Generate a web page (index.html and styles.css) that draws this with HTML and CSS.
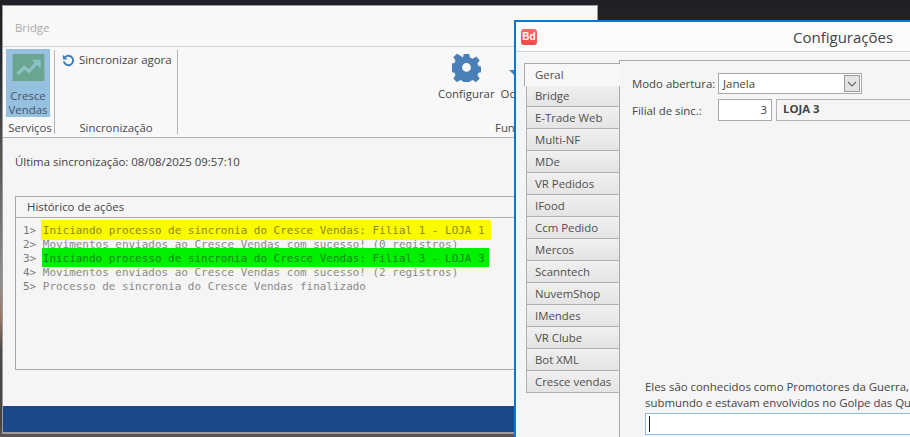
FILE: index.html
```html
<!DOCTYPE html>
<html lang="pt">
<head>
<meta charset="utf-8">
<title>Bridge</title>
<link rel="stylesheet" href="styles.css">
</head>
<body>
<div class="desktop">
  <section class="window main-window">
    <header class="main-title">Bridge</header>
    <div class="ribbon">
      <div class="group group-services">
        <div class="group-body">
          <button class="big-btn selected">
            <svg class="trend-icon" width="33" height="28" viewBox="0 0 33 28"><rect width="33" height="28" fill="#6aa58f"/><path d="M5 21 L12 14 L17 18 L25 9" fill="none" stroke="#8fc0c4" stroke-width="3.4"/><path d="M20 6 H29 V15 Z" fill="#8fc0c4"/></svg>
            <span>Cresce<br>Vendas</span>
          </button>
        </div>
        <div class="group-label">Serviços</div>
      </div>
      <div class="group group-sync">
        <div class="group-body">
          <div class="small-btn">
            <svg width="13" height="13" viewBox="0 0 13 13"><path d="M3 3.2 A4.7 4.7 0 1 1 1.8 7.6" fill="none" stroke="#3f7ab5" stroke-width="1.9"/><path d="M.8 .8 L1 5.4 L5.6 5.2 Z" fill="#3f7ab5"/></svg>
            <span>Sincronizar agora</span>
          </div>
        </div>
        <div class="group-label">Sincronização</div>
      </div>
      <div class="group group-func">
        <div class="group-body func-body">
          <div class="tool">
            <svg width="29" height="28" viewBox="0 0 29 28"><path fill="#4a7fb8" fill-rule="evenodd" d="M11.8 0h5.4l.8 4 2.6 1.1 3.5-2.2 3.6 3.7-2.2 3.4 1 2.6 4 .8v5.2l-4 .8-1 2.6 2.2 3.4-3.6 3.7-3.5-2.2-2.6 1.1-.8 4h-5.4l-.8-4-2.6-1.1-3.5 2.2-3.6-3.7 2.2-3.4-1-2.6-4-.8V10.4l4-.8 1-2.6-2.2-3.4 3.6-3.7 3.5 2.2L11 4zM14.5 9.6a4.4 4.4 0 1 0 0 8.8 4.4 4.4 0 0 0 0-8.8z" transform="translate(0 -.3) scale(1 .98)"/></svg>
            <span>Configurar</span>
          </div>
          <div class="tool">
            <svg width="29" height="28" viewBox="0 0 29 28"><path fill="#4a7fb8" d="M3 16 H27 L15 28 Z"/></svg>
            <span>Ocultar</span>
          </div>
        </div>
        <div class="group-label func-label">Funções</div>
      </div>
    </div>
    <div class="main-content">
      <p class="last-sync">Última sincronização: 08/08/2025 09:57:10</p>
      <div class="history">
        <div class="history-title">Histórico de ações</div>
        <div class="log">
          <div class="log-row"><span class="num">1&gt; </span><span class="hl yellow">Iniciando processo de sincronia do Cresce Vendas: Filial 1 - LOJA 1</span></div>
          <div class="log-row"><span class="num">2&gt; </span>Movimentos enviados ao Cresce Vendas com sucesso! (0 registros)</div>
          <div class="log-row"><span class="num">3&gt; </span><span class="hl green">Iniciando processo de sincronia do Cresce Vendas: Filial 3 - LOJA 3</span></div>
          <div class="log-row"><span class="num">4&gt; </span>Movimentos enviados ao Cresce Vendas com sucesso! (2 registros)</div>
          <div class="log-row"><span class="num">5&gt; </span>Processo de sincronia do Cresce Vendas finalizado</div>
        </div>
      </div>
    </div>
    <footer class="main-footer"></footer>
  </section>

  <section class="window dialog">
    <header class="dialog-title">
      <span class="app-badge">Bd</span>
      <span class="dialog-name">Configurações</span>
    </header>
    <div class="dialog-body">
      <nav class="tabs">
        <div class="tab active">Geral</div>
        <div class="tab">Bridge</div>
        <div class="tab">E-Trade Web</div>
        <div class="tab">Multi-NF</div>
        <div class="tab">MDe</div>
        <div class="tab">VR Pedidos</div>
        <div class="tab">IFood</div>
        <div class="tab">Ccm Pedido</div>
        <div class="tab">Mercos</div>
        <div class="tab">Scanntech</div>
        <div class="tab">NuvemShop</div>
        <div class="tab">IMendes</div>
        <div class="tab">VR Clube</div>
        <div class="tab">Bot XML</div>
        <div class="tab">Cresce vendas</div>
      </nav>
      <div class="panel">
        <div class="form-row">
          <label class="form-label">Modo abertura:</label>
          <div class="combo"><span>Janela</span><span class="combo-arrow"><svg width="10" height="6" viewBox="0 0 10 6"><path d="M1 1 L5 5 L9 1" fill="none" stroke="#666" stroke-width="1.2"/></svg></span></div>
        </div>
        <div class="form-row row-second">
          <label class="form-label">Filial de sinc.:</label>
          <div class="num-input">3</div>
          <div class="store-name">LOJA 3</div>
        </div>
        <div class="spacer"></div>
        <p class="quote">Eles são conhecidos como Promotores da Guerra, sendo figuras influentes do<br>submundo e estavam envolvidos no Golpe das Quatro Famílias</p>
        <div class="text-input"><span class="caret"></span></div>
      </div>
    </div>
  </section>
</div>
</body>
</html>
```
FILE: styles.css
```css
* { box-sizing: border-box; }
html, body { margin: 0; padding: 0; }
body {
  width: 910px;
  height: 437px;
  overflow: hidden;
  font-family: "Open Sans", "Noto Sans", sans-serif;
  font-size: 11.4px;
  color: #444;
}
.desktop {
  position: relative;
  width: 910px;
  height: 437px;
  overflow: hidden;
  background: linear-gradient(to bottom, #1f2025 0, #26272c 60px, #6d6a6a 200px, #8a9090 280px, #a07868 315px, #4a4a4a 350px, #454545 425px, #5e5550 437px);
}
.window { position: absolute; display: flex; flex-direction: column; background: #f5f5f5; }

.main-window {
  left: 2px; top: 5px; width: 596px; height: 429px;
  border: 1px solid #9c9c9c;
  border-width: 1px 1px 2px 1px;
  overflow: hidden;
}
.main-title {
  height: 41px; flex: none; padding: 14px 0 0 12px;
  line-height: 16px; color: #a8a8a8;
  background: #f8f8f8;
  border-bottom: 1px solid #d4d4d4;
}
.ribbon {
  height: 91px; flex: none; display: flex;
  background: #f8f8f8;
  border-bottom: 1px solid #b0b0b0;
  padding-top: 3px;
}
.group { display: flex; flex-direction: column; border-right: 1px solid #b2b2b2; margin-bottom: 3px; }
.group-body { flex: 1; min-height: 0; }
.group-label { height: 12px; line-height: 12px; text-align: center; color: #4a4a4a; }
.group-services { width: 52px; padding-left: 3px; }
.group-sync { width: 123px; }
.group-func { flex: 1; border-right: none; }
.big-btn {
  display: flex; flex-direction: column; align-items: center; width: 44px; height: 68px;
  padding: 5px 0 0; margin: -1px 0 0; border: none;
  background: #96c0e0; font: inherit; color: #43546b; line-height: 14px;
}
.big-btn span { margin-top: 8px; }
.trend-icon { display: block; }
.small-btn { display: flex; align-items: center; gap: 4px; padding: 2px 0 0 7px; line-height: 16px; color: #454545; }
.func-body { display: flex; padding: 4px 0 0 260px; gap: 6px; }
.tool { display: flex; flex-direction: column; align-items: center; gap: 4px; line-height: 16px; color: #454545; }
.func-label { padding-left: 317px; text-align: left; white-space: nowrap; }

.main-content { flex: 1; display: flex; flex-direction: column; padding: 0 12px; min-height: 0; }
.last-sync { margin: 15px 0 0; line-height: 17px; color: #3f3f3f; }
.history {
  margin-top: 26px; height: 174px;
  border: 1px solid #a8a8a8;
}
.history-title { height: 21px; padding-left: 11px; line-height: 19px; color: #444; border-bottom: 1px solid #b0b0b0; }
.log { padding: 6px 0 0 7px; font-family: "DejaVu Sans Mono", "Liberation Mono", monospace; font-size: 10.96px; line-height: 14px; color: #8a8a8a; }
.log-row { height: 14px; white-space: pre; position: relative; z-index: 0; }
.num { color: #7a7a7a; }
.hl { position: relative; }
.hl::before { content: ""; position: absolute; z-index: -1; }
.yellow { color: #8e8a10; }
.yellow::before { top: -4px; bottom: -3px; left: -2px; right: -6px; background: #fafa00; }
.green { color: #0c8a1a; }
.green::before { top: -4px; bottom: -2px; left: -1px; right: -4px; background: #00f000; }
.main-footer { height: 26px; flex: none; background: #1a4888; margin-top: auto; }

.dialog {
  left: 514px; top: 20px; width: 396px; height: 417px;
  border: 2px solid #0a78d0; border-width: 2px 0 0 2px;
  background: #f5f5f5;
}
.dialog-title {
  height: 30px; flex: none; display: flex; align-items: center;
  background: #fbfbfb; border-bottom: 1px solid #d4d4d4;
  padding-left: 5px;
}
.app-badge {
  width: 16px; height: 16px; border-radius: 3px; background: linear-gradient(#ff6a6a, #f04848);
  color: #fff; font-size: 10px; font-weight: 700; line-height: 16px; text-align: center; font-family: "Liberation Sans", sans-serif;
}
.dialog-name { margin-left: 256px; font-size: 15px; color: #444; white-space: nowrap; }
.dialog-body { flex: 1; display: flex; padding: 8px 0 0 8px; min-height: 0; }
.tabs { width: 96px; flex: none; padding-top: 3px; }
.tab {
  width: 94px; height: 22px; margin-left: 2px; padding-left: 8px; line-height: 22px;
  color: #4e4e4e;
  background: linear-gradient(#f0f0f0, #e4e4e4);
  border: 1px solid #b0b0b0; border-top: none;
}
.tab:nth-child(2) { border-top: 1px solid #b0b0b0; line-height: 20px; }
.tab.active {
  width: 96px; height: 23px; margin: 0 0 -1px 0; padding: 0 0 0 10px;
  background: #f7f7f7; border: 1px solid #a8a8a8; border-right: none; border-bottom: none;
  position: relative; z-index: 1;
}
.panel {
  flex: 1; display: flex; flex-direction: column; min-width: 0;
  margin-left: -1px;
  border: 1px solid #a8a8a8; border-right: none; border-bottom: none;
  padding: 12px 0 2px 12px;
  background: #f5f5f5; overflow: hidden;
}
.form-row { display: flex; align-items: center; height: 21px; white-space: nowrap; }
.row-second { margin-top: 5px; height: 22px; }
.form-label { width: 86px; flex: none; color: #444; }
.combo {
  width: 144px; height: 21px; flex: none; display: flex; align-items: center; justify-content: space-between;
  padding: 0 1px 0 4px; background: #fff; border: 1px solid #a8a8a8;
}
.combo-arrow { width: 16px; height: 17px; display: flex; align-items: center; justify-content: center; background: #e4e4e4; border: 1px solid #9a9a9a; }
.num-input { width: 54px; height: 22px; flex: none; background: #fff; border: 1px solid #a8a8a8; text-align: right; padding-right: 4px; line-height: 20px; }
.store-name { width: 300px; height: 22px; flex: none; margin-left: 4px; padding-left: 6px; border: 1px solid #b4b4b4; background: #f5f5f5; font-weight: 700; line-height: 17px; }
.spacer { flex: 1; }
.quote { margin: 0 0 2px 13px; white-space: nowrap; line-height: 16px; color: #444; }
.text-input { height: 22px; margin-left: 13px; flex: none; width: 400px; background: #fff; border: 1px solid #8cbde4; padding: 2px 0 0 3px; }
.caret { display: block; width: 1px; height: 16px; background: #222; }
```
